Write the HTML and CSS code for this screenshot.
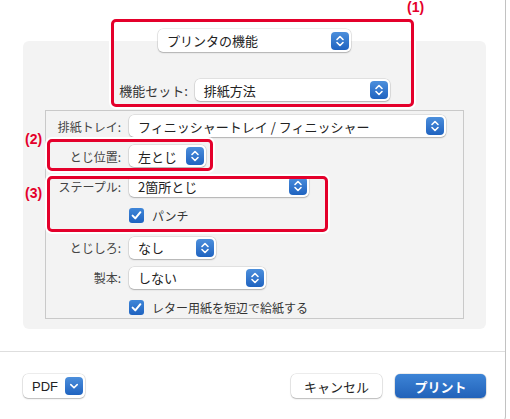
FILE: index.html
```html
<!DOCTYPE html>
<html lang="ja">
<head>
    <meta charset="UTF-8">
    <title>プリント</title>
    <link rel="stylesheet" href="styles.css">
</head>
<body>
    <div class="window">
        <div class="sheet">
            <div class="panel">
                <div class="head">
                    <div class="popup w-head">
                        <span>プリンタの機能</span>
                        <svg class="step" viewBox="0 0 18 18"><path d="M6 7.5 L9 4.5 L12 7.5 M6 10.5 L9 13.5 L12 10.5"/></svg>
                    </div>
                </div>
                <div class="preset">
                    <span class="preset-label">機能セット:</span>
                    <div class="popup w-preset">
                        <span>排紙方法</span>
                        <svg class="step" viewBox="0 0 18 18"><path d="M6 7.5 L9 4.5 L12 7.5 M6 10.5 L9 13.5 L12 10.5"/></svg>
                    </div>
                </div>
                <div class="box">
                    <div class="row">
                        <span class="label">排紙トレイ:</span>
                        <div class="popup w-tray">
                            <span>フィニッシャートレイ / フィニッシャー</span>
                            <svg class="step" viewBox="0 0 18 18"><path d="M6 7.5 L9 4.5 L12 7.5 M6 10.5 L9 13.5 L12 10.5"/></svg>
                        </div>
                    </div>
                    <div class="row">
                        <span class="label">とじ位置:</span>
                        <div class="popup w-pos">
                            <span>左とじ</span>
                            <svg class="step" viewBox="0 0 18 18"><path d="M6 7.5 L9 4.5 L12 7.5 M6 10.5 L9 13.5 L12 10.5"/></svg>
                        </div>
                    </div>
                    <div class="row">
                        <span class="label">ステープル:</span>
                        <div class="popup w-staple">
                            <span>2箇所とじ</span>
                            <svg class="step" viewBox="0 0 18 18"><path d="M6 7.5 L9 4.5 L12 7.5 M6 10.5 L9 13.5 L12 10.5"/></svg>
                        </div>
                    </div>
                    <div class="row">
                        <span></span>
                        <label class="check">
                            <svg class="tick" viewBox="0 0 15 15"><path d="M3.6 7.6 L6.3 10.4 L11.4 4.2"/></svg>
                            パンチ
                        </label>
                    </div>
                    <div class="row gap-more">
                        <span class="label">とじしろ:</span>
                        <div class="popup w-margin">
                            <span>なし</span>
                            <svg class="step" viewBox="0 0 18 18"><path d="M6 7.5 L9 4.5 L12 7.5 M6 10.5 L9 13.5 L12 10.5"/></svg>
                        </div>
                    </div>
                    <div class="row">
                        <span class="label">製本:</span>
                        <div class="popup w-book">
                            <span>しない</span>
                            <svg class="step" viewBox="0 0 18 18"><path d="M6 7.5 L9 4.5 L12 7.5 M6 10.5 L9 13.5 L12 10.5"/></svg>
                        </div>
                    </div>
                    <div class="row">
                        <span></span>
                        <label class="check">
                            <svg class="tick" viewBox="0 0 15 15"><path d="M3.6 7.6 L6.3 10.4 L11.4 4.2"/></svg>
                            レター用紙を短辺で給紙する
                        </label>
                    </div>
                </div>
            </div>
        </div>

        <div class="footer">
            <div class="pdf">
                <span>PDF</span>
                <svg class="step small" viewBox="0 0 18 18"><path d="M5.8 7.6 L9 10.8 L12.2 7.6"/></svg>
            </div>
            <div class="actions">
                <button class="btn">キャンセル</button>
                <button class="btn primary">プリント</button>
            </div>
        </div>

        <!-- 注釈 -->
        <div class="mark mark-1"></div>
        <div class="mark mark-2"></div>
        <div class="mark mark-3"></div>
        <span class="tag tag-1">(1)</span>
        <span class="tag tag-2">(2)</span>
        <span class="tag tag-3">(3)</span>
    </div>
</body>
</html>
```

FILE: styles.css
```css
html, body {
    margin: 0;
    padding: 0;
    background-color: #fff;
}
body {
    width: 510px;
    height: 419px;
    overflow: hidden;
    font-family: "Noto Sans CJK JP", "Noto Sans", sans-serif;
    color: #222;
}
.window {
    position: relative;
    width: 506px;
    height: 424px;
    border-right: 1px solid #c2c2c2;
    border-bottom: 1px solid #c2c2c2;
    border-bottom-right-radius: 8px;
    box-sizing: border-box;
}
.sheet {
    height: 352px;
    border-bottom: 1px solid #dedede;
    padding-top: 41px;
    padding-left: 23px;
    box-sizing: border-box;
}
.panel {
    display: flow-root;
    width: 463px;
    height: 288px;
    background-color: #f3f3f3;
    border-radius: 6px;
    padding: 0 22px;
    box-sizing: border-box;
}
.head {
    display: flex;
    justify-content: center;
    margin-top: -12px;
}
.popup {
    display: flex;
    align-items: center;
    justify-content: space-between;
    height: 22px;
    background-color: #fff;
    border-radius: 5px;
    box-shadow: 0 0 0 0.5px rgba(0, 0, 0, 0.14), 0 1px 1.5px rgba(0, 0, 0, 0.22);
    padding: 0 2px 0 9px;
    box-sizing: border-box;
    font-size: 13px;
    line-height: 1;
    color: #222;
}
.w-head { width: 193px; height: 23px; }
.w-preset { width: 195px; }
.w-tray { width: 317px; }
.w-pos { width: 77px; }
.w-staple { width: 180px; }
.w-margin { width: 87px; }
.w-book { width: 137px; }
.step {
    width: 18px;
    height: 18px;
    flex-shrink: 0;
    border-radius: 4px;
    background: linear-gradient(#4c8fdc, #1f63c0);
}
.step path, .tick path {
    fill: none;
    stroke: #fff;
    stroke-width: 1.6;
    stroke-linecap: round;
    stroke-linejoin: round;
}
.preset {
    display: flex;
    align-items: center;
    justify-content: center;
    gap: 7px;
    margin-top: 27px;
}
.preset-label {
    font-size: 13px;
    color: #333;
}
.box {
    margin-top: 9px;
    height: 209px;
    border: 1px solid #c9c9c9;
    padding-top: 4px;
    box-sizing: border-box;
    display: flex;
    flex-direction: column;
    gap: 8px;
}
.row {
    display: grid;
    grid-template-columns: 75px auto;
    column-gap: 8px;
    align-items: center;
    justify-items: start;
    height: 22px;
}
.row.gap-more {
    margin-top: 2px;
}
.label {
    justify-self: end;
    font-size: 12px;
    color: #444;
}
.check {
    display: flex;
    align-items: center;
    gap: 8px;
    font-size: 12px;
    color: #333;
}
.tick {
    width: 15px;
    height: 15px;
    border-radius: 3px;
    background: linear-gradient(#3f86d8, #1f63c0);
}
.tick path {
    stroke-width: 2;
}
.footer {
    display: flex;
    justify-content: space-between;
    align-items: center;
    padding: 22px 19px 0 23px;
}
.pdf {
    display: flex;
    align-items: center;
    justify-content: space-between;
    width: 62px;
    height: 24px;
    padding: 0 2px 0 9px;
    box-sizing: border-box;
    background-color: #fff;
    border-radius: 5px;
    box-shadow: 0 0 0 0.5px rgba(0, 0, 0, 0.14), 0 1px 1.5px rgba(0, 0, 0, 0.22);
    font-family: "Liberation Sans", Arial, sans-serif;
    font-size: 13px;
    color: #222;
}
.actions {
    display: flex;
    gap: 13px;
}
.btn {
    width: 91px;
    height: 24px;
    border: none;
    border-radius: 5px;
    background-color: #fff;
    box-shadow: 0 0 0 0.5px rgba(0, 0, 0, 0.14), 0 1px 1.5px rgba(0, 0, 0, 0.22);
    font-family: "Noto Sans CJK JP", sans-serif;
    font-size: 13px;
    color: #222;
    padding: 0;
}
.btn.primary {
    background: linear-gradient(#3d84d6, #2262b9);
    color: #fff;
    font-weight: bold;
}
.mark {
    position: absolute;
    border: 3px solid #e4002b;
    border-radius: 5px;
    box-shadow: 0 0 0 2px #fff;
    box-sizing: border-box;
}
.mark-1 { left: 111px; top: 19px; width: 303px; height: 88px; }
.mark-2 { left: 47px; top: 139px; width: 166px; height: 32px; }
.mark-3 { left: 47px; top: 176px; width: 281px; height: 56px; }
.tag {
    position: absolute;
    font-family: "Liberation Sans", Arial, sans-serif;
    font-weight: bold;
    font-size: 14px;
    line-height: 1;
    color: #e4002b;
}
.tag-1 { left: 407px; top: 0; }
.tag-2 { left: 25px; top: 132px; }
.tag-3 { left: 25px; top: 186px; }
```
